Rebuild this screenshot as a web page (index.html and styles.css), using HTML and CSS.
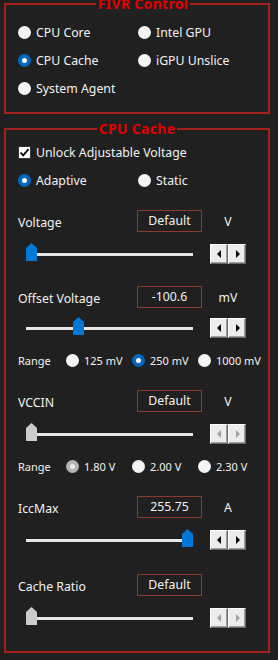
FILE: index.html
```html
<!DOCTYPE html>
<html>
<head>
<meta charset="utf-8">
<link rel="stylesheet" href="styles.css">
</head>
<body>
<fieldset class="group group-fivr">
  <legend class="group-title">FIVR Control</legend>
  <div class="radio-grid">
    <label class="opt"><span class="radio"></span>CPU Core</label>
    <label class="opt"><span class="radio"></span>Intel GPU</label>
    <label class="opt"><span class="radio checked"></span>CPU Cache</label>
    <label class="opt"><span class="radio"></span>iGPU Unslice</label>
    <label class="opt"><span class="radio"></span>System Agent</label>
  </div>
</fieldset>

<fieldset class="group group-cache">
  <legend class="group-title">CPU Cache</legend>

  <label class="opt check-row">
    <span class="checkbox"><svg viewBox="0 0 13 13" width="13" height="13"><path d="M2.5 6.5 L5.2 9.3 L10.5 3.2" fill="none" stroke="#000" stroke-width="1.8"/></svg></span>
    Unlock Adjustable Voltage
  </label>

  <div class="mode-row">
    <label class="opt"><span class="radio checked"></span>Adaptive</label>
    <label class="opt"><span class="radio"></span>Static</label>
  </div>

  <div class="field-row r-voltage">
    <span class="field-label">Voltage</span>
    <span class="value-box">Default</span>
    <span class="unit">V</span>
  </div>
  <div class="slider-row s-voltage">
    <div class="track"><span class="thumb" style="left:0px"></span></div>
    <div class="spin"><span class="spin-btn"><span class="arr-l"></span></span><span class="spin-btn"><span class="arr-r"></span></span></div>
  </div>

  <div class="field-row r-offset">
    <span class="field-label">Offset Voltage</span>
    <span class="value-box">-100.6</span>
    <span class="unit">mV</span>
  </div>
  <div class="slider-row s-offset">
    <div class="track"><span class="thumb" style="left:47px"></span></div>
    <div class="spin"><span class="spin-btn"><span class="arr-l"></span></span><span class="spin-btn"><span class="arr-r"></span></span></div>
  </div>

  <div class="range-row rr-offset">
    <span class="range-label">Range</span>
    <label class="opt small"><span class="radio"></span>125 mV</label>
    <label class="opt small"><span class="radio checked"></span>250 mV</label>
    <label class="opt small"><span class="radio"></span>1000 mV</label>
  </div>

  <div class="field-row r-vccin">
    <span class="field-label">VCCIN</span>
    <span class="value-box">Default</span>
    <span class="unit">V</span>
  </div>
  <div class="slider-row s-vccin disabled">
    <div class="track"><span class="thumb" style="left:0px"></span></div>
    <div class="spin"><span class="spin-btn"><span class="arr-l"></span></span><span class="spin-btn"><span class="arr-r"></span></span></div>
  </div>

  <div class="range-row rr-vccin">
    <span class="range-label">Range</span>
    <label class="opt small"><span class="radio checked-disabled"></span>1.80 V</label>
    <label class="opt small"><span class="radio"></span>2.00 V</label>
    <label class="opt small"><span class="radio"></span>2.30 V</label>
  </div>

  <div class="field-row r-icc">
    <span class="field-label">IccMax</span>
    <span class="value-box">255.75</span>
    <span class="unit">A</span>
  </div>
  <div class="slider-row s-icc">
    <div class="track"><span class="thumb" style="left:156px"></span></div>
    <div class="spin"><span class="spin-btn"><span class="arr-l"></span></span><span class="spin-btn"><span class="arr-r"></span></span></div>
  </div>

  <div class="field-row r-ratio">
    <span class="field-label">Cache Ratio</span>
    <span class="value-box">Default</span>
    <span class="unit"></span>
  </div>
  <div class="slider-row s-ratio disabled">
    <div class="track"><span class="thumb" style="left:0px"></span></div>
    <div class="spin"><span class="spin-btn"><span class="arr-l"></span></span><span class="spin-btn"><span class="arr-r"></span></span></div>
  </div>
</fieldset>
</body>
</html>
```

FILE: styles.css
```css
html, body {
  margin: 0;
  padding: 0;
  background: #202020;
  height: 660px;
  overflow: hidden;
}
body {
  font-family: "Noto Sans", "DejaVu Sans", sans-serif;
  font-size: 12.3px;
  color: #f2f2f2;
}

.group {
  margin: 0 8px 0 4px;
  padding: 0;
  border: 2px solid #a3201f;
  min-width: 0;
}
.group-fivr {
  margin-top: -4px;
  padding: 0 0 10px 12px;
}
.group-cache {
  margin-top: 7px;
  padding: 0 0 23px 0;
}
.group-title {
  margin: 0 auto;
  padding: 0 2px;
  font-family: "Noto Sans", "DejaVu Sans", sans-serif;
  font-weight: bold;
  font-size: 14px;
  letter-spacing: 0.3px;
  line-height: 16px;
  color: #e00000;
}

.opt {
  display: flex;
  align-items: center;
  gap: 5px;
  white-space: nowrap;
}

.radio-grid {
  display: grid;
  grid-template-columns: 120px auto;
  grid-auto-rows: 28px;
  padding-top: 6px;
}

.radio {
  display: inline-block;
  position: relative;
  width: 13px;
  height: 13px;
  border-radius: 50%;
  background: #f4f4f4;
  flex: none;
}
.radio.checked {
  background: #0067c0;
}
.radio.checked::after,
.radio.checked-disabled::after {
  content: "";
  position: absolute;
  left: 4px;
  top: 4px;
  width: 5px;
  height: 5px;
  border-radius: 50%;
  background: #fff;
}
.radio.checked-disabled {
  background: #b4b4b4;
}
.radio.checked-disabled::after {
  background: #ececec;
}

.check-row {
  height: 22px;
  margin-top: 4px;
  padding-left: 12px;
}
.checkbox {
  display: inline-block;
  width: 13px;
  height: 13px;
  box-sizing: border-box;
  background: #fff;
  border: 1px solid #333;
  flex: none;
  position: relative;
}
.checkbox svg {
  position: absolute;
  left: -1px;
  top: -1px;
}

.mode-row {
  display: grid;
  grid-template-columns: 120px auto;
  height: 22px;
  margin-top: 6px;
  padding-left: 12px;
}

.field-row {
  display: grid;
  grid-template-columns: 119px 65px 52px;
  align-items: center;
  height: 22px;
  padding-left: 12px;
}
.field-label {
  padding-top: 2px;
}
.value-box {
  box-sizing: border-box;
  height: 22px;
  border: 1px solid #8c3a2c;
  display: flex;
  align-items: center;
  justify-content: center;
  padding-bottom: 1px;
}
.unit {
  text-align: center;
  padding-top: 1px;
}

.r-voltage { margin-top: 19px; }
.s-voltage { margin-top: 12px; }
.r-offset { margin-top: 22px; }
.s-offset { margin-top: 10px; }
.rr-offset { margin-top: 12px; }
.r-vccin { margin-top: 20px; }
.s-vccin { margin-top: 12px; }
.rr-vccin { margin-top: 12px; }
.r-icc { margin-top: 20px; }
.s-icc { margin-top: 12px; }
.r-ratio { margin-top: 24px; }
.s-ratio { margin-top: 12px; }

.slider-row {
  display: flex;
  align-items: center;
  height: 20px;
  padding-left: 20px;
  gap: 17px;
}
.track {
  position: relative;
  width: 167px;
  height: 3px;
  background: #e6e6e6;
  margin-top: 1px;
}
.thumb {
  position: absolute;
  top: -10px;
  width: 11px;
  height: 18px;
  background: #0078d7;
  clip-path: polygon(50% 0, 100% 5px, 100% 100%, 0 100%, 0 5px);
}
.disabled .thumb {
  background: #cccccc;
}

.spin {
  display: flex;
  height: 20px;
}
.spin-btn {
  box-sizing: border-box;
  width: 18px;
  height: 20px;
  background: #ececec;
  border: 1px solid;
  border-color: #ffffff #696969 #696969 #ffffff;
  box-shadow: inset -1px -1px 0 #a0a0a0;
  display: flex;
  align-items: center;
  justify-content: center;
}
.arr-l, .arr-r {
  width: 0;
  height: 0;
  border-top: 4px solid transparent;
  border-bottom: 4px solid transparent;
}
.arr-l { border-right: 4px solid #000; margin-right: 1px; }
.arr-r { border-left: 4px solid #000; margin-left: 1px; }
.disabled .arr-l { border-right-color: #a0a0a0; }
.disabled .arr-r { border-left-color: #a0a0a0; }

.range-row {
  display: grid;
  grid-template-columns: 48px 66px 66px auto;
  align-items: center;
  height: 20px;
  padding-left: 12px;
  font-size: 11px;
}
```
